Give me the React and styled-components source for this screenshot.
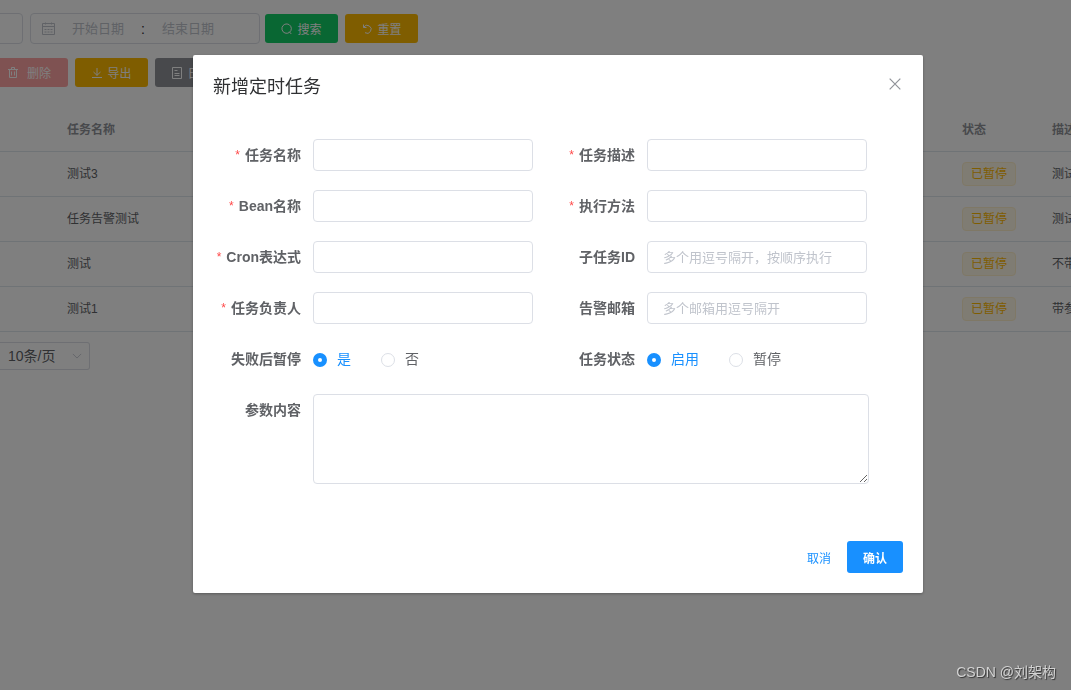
import React, { useId, useState } from "react";
import styled, { createGlobalStyle, css } from "styled-components";

const GlobalStyle = createGlobalStyle`
  * { box-sizing: border-box; }
  body {
    margin: 0;
    background: #fff;
    color: #606266;
    font-family: "Liberation Sans", "Noto Sans CJK SC", sans-serif;
    font-size: 14px;
    overflow: hidden;
  }
  button, input, select, textarea { font-family: inherit; }
`;

const Page = styled.main`
  min-height: 100vh;
  overflow: hidden;
`;

const Toolbar = styled.div`
  display: flex;
  align-items: center;
  gap: 7px;
  padding-top: ${(p) => (p.$top ? 13 : 14)}px;
`;

const SearchInput = styled.input`
  width: 43px;
  height: 31px;
  margin-left: -20px;
  border: 1px solid #dcdfe6;
  border-radius: 4px;
  background: #fff;
`;

const DateRange = styled.div`
  display: flex;
  align-items: center;
  width: 230px;
  height: 31px;
  margin-right: -2px;
  padding: 0 10px;
  border: 1px solid #dcdfe6;
  border-radius: 4px;
  color: #303133;
  svg { color: #c0c4cc; margin: 0 2px 0 1px; }
`;

const RangeSeparator = styled.span`
  width: 10px;
  text-align: center;
`;

const DateInput = styled.input`
  width: 80px;
  padding: 0;
  border: 0;
  outline: 0;
  background: none;
  font-size: 13px;
  text-align: center;
  &::placeholder { color: #c0c4cc; opacity: 1; }
`;

const tones = {
  success: "#13ce66",
  warning: "#ffba00",
  danger: "#ffa4a4",
  info: "#909399",
};

const ToolButton = styled.button`
  display: flex;
  align-items: center;
  justify-content: center;
  gap: 4px;
  flex: none;
  width: 73px;
  height: 29px;
  padding: 0;
  border: 0;
  border-radius: 3px;
  background: ${(p) => tones[p.$tone]};
  color: #fff;
  font-size: 12px;
  white-space: nowrap;
`;

const DeleteButton = styled(ToolButton)`
  gap: 8px;
  width: 78px;
  margin-left: -10px;
`;

const Table = styled.table`
  width: 100%;
  margin-top: 19px;
  border-collapse: collapse;
  table-layout: fixed;
  font-size: 12px;
  white-space: nowrap;
`;

const HeadCell = styled.th`
  height: 45px;
  padding: 4px 0 0;
  border-bottom: 1px solid #dfe6ec;
  color: #909399;
  text-align: left;
  line-height: 22px;
`;

const Cell = styled.td`
  height: 45px;
  padding: 0;
  border-bottom: 1px solid #dfe6ec;
  color: #606266;
  line-height: 22px;
`;

const Col = styled.col`
  width: ${(p) => (p.$w ? p.$w + "px" : "auto")};
`;

const Tag = styled.span`
  display: inline-block;
  height: 24px;
  padding: 0 8px;
  border: 1px solid #fff1cc;
  border-radius: 4px;
  background: #fff8e6;
  color: #ffba00;
  line-height: 22px;
  vertical-align: middle;
`;

const PageSize = styled.div`
  position: relative;
  width: 90px;
  margin-top: 10px;
  svg { position: absolute; right: 8px; top: 9px; color: #c0c4cc; pointer-events: none; }
`;

const PageSelect = styled.select`
  appearance: none;
  width: 100%;
  height: 28px;
  padding: 0 8px;
  border: 1px solid #dcdfe6;
  border-left: 0;
  border-radius: 0 3px 3px 0;
  background: #fff;
  color: #606266;
  font-size: 14px;
`;

const Overlay = styled.div`
  position: fixed;
  inset: 0;
  padding: 55px 0 20px 45px;
  background: rgba(0, 0, 0, 0.5);
`;

const Dialog = styled.section`
  width: 730px;
  max-width: 100%;
  margin: 0 auto;
  border-radius: 2px;
  background: #fff;
  box-shadow: 0 1px 3px rgba(0, 0, 0, 0.3);
`;

const DialogHeader = styled.header`
  display: flex;
  justify-content: space-between;
  align-items: flex-start;
  padding: 20px 20px 10px;
`;

const Title = styled.h2`
  margin: 0;
  color: #303133;
  font-size: 18px;
  font-weight: 400;
  line-height: 24px;
`;

const CloseButton = styled.button`
  display: flex;
  padding: 1px 0;
  border: 0;
  background: none;
  color: #909399;
`;

const Form = styled.form`
  display: grid;
  grid-template-columns: 320px 320px;
  column-gap: 14px;
  row-gap: 19px;
  padding: 30px 20px;
`;

const Field = styled.div`
  display: flex;
  min-width: 0;
  ${(p) =>
    p.$wide &&
    css`
      grid-column: 1 / -1;
      width: 656px;
    `}
`;

const labelStyle = css`
  flex: none;
  width: 100px;
  padding-right: 12px;
  color: #606266;
  font-size: 14px;
  font-weight: 700;
  line-height: 32px;
  text-align: right;
`;

const Label = styled.label`
  ${labelStyle}
  ${(p) =>
    p.$required &&
    css`
      &::before {
        content: "*";
        margin-right: 5px;
        color: #ff4949;
        font-size: 12px;
        font-weight: 400;
        vertical-align: 1px;
        line-height: 1;
      }
    `}
`;

const GroupLabel = styled.span`
  ${labelStyle}
`;

const TextInput = styled.input`
  flex: 1;
  min-width: 0;
  height: 32px;
  padding: 0 15px;
  border: 1px solid #dcdfe6;
  border-radius: 4px;
  background: #fff;
  color: #606266;
  font-size: 13px;
  outline: 0;
  &::placeholder { color: #c0c4cc; opacity: 1; }
`;

const TextArea = styled.textarea`
  flex: 1;
  height: 90px;
  padding: 5px 15px;
  border: 1px solid #dcdfe6;
  border-radius: 4px;
  background: #fff;
  color: #606266;
  font-size: 13px;
  outline: 0;
  resize: vertical;
`;

const RadioGroup = styled.div`
  display: flex;
  align-items: center;
  gap: 30px;
`;

const RadioLabel = styled.label`
  display: flex;
  align-items: center;
  gap: 10px;
  color: ${(p) => (p.$checked ? "#1890ff" : "#606266")};
  font-size: 14px;
  line-height: 32px;
`;

const Radio = styled.input`
  appearance: none;
  width: 14px;
  height: 14px;
  margin: 2px 0 0;
  border: 1px solid #dcdfe6;
  border-radius: 50%;
  background: #fff;
  &:checked {
    border: 5px solid #1890ff;
  }
`;

const DialogFooter = styled.footer`
  display: flex;
  justify-content: flex-end;
  gap: 16px;
  padding: 27px 20px 20px;
`;

const TextButton = styled.button`
  padding: 0;
  border: 0;
  background: none;
  color: #1890ff;
  font-size: 12px;
`;

const PrimaryButton = styled.button`
  width: 56px;
  height: 32px;
  padding: 0;
  border: 0;
  border-radius: 3px;
  background: #1890ff;
  color: #fff;
  font-size: 12px;
  font-weight: 700;
`;

const Watermark = styled.div`
  position: fixed;
  right: 15px;
  bottom: 7px;
  color: #d2d2d2;
  font-size: 14px;
  line-height: 22px;
  text-shadow: 1px 1px 1px rgba(0, 0, 0, 0.6);
`;

function Icon({ size = 12, children }) {
  return (
    <svg width={size} height={size} viewBox="0 0 12 12" fill="none" stroke="currentColor" strokeWidth="1" aria-hidden="true">
      {children}
    </svg>
  );
}

const CalendarIcon = () => (
  <svg width="14" height="14" viewBox="0 0 14 14" fill="none" stroke="currentColor" aria-hidden="true">
    <path d="M.5 1.5h12v11h-12zM.5 4.500h12M3.500 .5v2M9.500 .5v2M2.500 7.500h2M5.500 7.500h2M8.500 7.500h2M2.500 10h2M5.500 10h2M8.500 10h2" />
  </svg>
);
const SearchIcon = () => (
  <Icon><path d="M8.300 9.500A4.700 4.700 0 1 1 9.900 7.600M8.300 8.800l2 2.200" /><path d="M9.900 7.600l-1.600 1.900" /></Icon>
);
const RefreshIcon = () => (
  <Icon><path d="M2.500 1.500v3h3M2.700 4.200A4 4 0 1 1 4 9.700" /></Icon>
);
const TrashIcon = () => (
  <Icon><path d="M1 2.500h10M4.500 2.500v-2h3v2M2.500 2.500v8h7v-8M4.500 4.500v4M7.500 4.500v4" /></Icon>
);
const DownloadIcon = () => (
  <Icon><path d="M6 1v7.500M2.500 5L6 8.300 9.500 5M1 10.500h10" /></Icon>
);
const DocumentIcon = () => (
  <Icon><path d="M1.500 .5h9v11h-9zM3.500 3.500h3M3.500 6.500h5M3.500 8.500h5" /></Icon>
);
const ChevronIcon = () => (
  <Icon size={10}><path d="M1 3.500l5 5 5-5" /></Icon>
);
const CloseIcon = () => (
  <Icon size={16}><path d="M2 2l8 8M10 2l-8 8" strokeWidth=".9" /></Icon>
);

function InputField({ label, required, placeholder }) {
  const id = useId();
  return (
    <Field>
      <Label htmlFor={id} $required={required}>{label}</Label>
      <TextInput id={id} type="text" placeholder={placeholder} />
    </Field>
  );
}

function RadioField({ label, options }) {
  const id = useId();
  const [value, setValue] = useState(options[0]);
  return (
    <Field role="radiogroup" aria-labelledby={id}>
      <GroupLabel id={id}>{label}</GroupLabel>
      <RadioGroup>
        {options.map((option) => (
          <RadioLabel key={option} $checked={value === option}>
            <Radio type="radio" name={id} checked={value === option} onChange={() => setValue(option)} />
            {option}
          </RadioLabel>
        ))}
      </RadioGroup>
    </Field>
  );
}

const rows = [
  ["测试3", "测试任务"],
  ["任务告警测试", "测试告警"],
  ["测试", "不带参数"],
  ["测试1", "带参数"],
];

export default function App() {
  return (
    <>
      <GlobalStyle />
      <Page>
        <Toolbar $top>
          <SearchInput type="text" aria-label="任务名称" />
          <DateRange>
            <CalendarIcon />
            <DateInput placeholder="开始日期" aria-label="开始日期" />
            <RangeSeparator>:</RangeSeparator>
            <DateInput placeholder="结束日期" aria-label="结束日期" />
          </DateRange>
          <ToolButton type="button" $tone="success"><SearchIcon />搜索</ToolButton>
          <ToolButton type="button" $tone="warning"><RefreshIcon />重置</ToolButton>
        </Toolbar>
        <Toolbar>
          <DeleteButton type="button" $tone="danger" disabled><TrashIcon />删除</DeleteButton>
          <ToolButton type="button" $tone="warning"><DownloadIcon />导出</ToolButton>
          <ToolButton type="button" $tone="info"><DocumentIcon />日志</ToolButton>
        </Toolbar>
        <Table>
          <colgroup>
            <Col $w={67} />
            <Col />
            <Col $w={90} />
            <Col $w={19} />
          </colgroup>
          <thead>
            <tr>
              <HeadCell />
              <HeadCell>任务名称</HeadCell>
              <HeadCell>状态</HeadCell>
              <HeadCell>描述</HeadCell>
            </tr>
          </thead>
          <tbody>
            {rows.map(([name, description]) => (
              <tr key={name}>
                <Cell />
                <Cell>{name}</Cell>
                <Cell><Tag>已暂停</Tag></Cell>
                <Cell>{description}</Cell>
              </tr>
            ))}
          </tbody>
        </Table>
        <PageSize>
          <PageSelect aria-label="每页条数"><option>10条/页</option></PageSelect>
          <ChevronIcon />
        </PageSize>
      </Page>
      <Overlay>
        <Dialog role="dialog" aria-modal="true" aria-labelledby="dialog-title">
          <DialogHeader>
            <Title id="dialog-title">新增定时任务</Title>
            <CloseButton type="button" aria-label="关闭"><CloseIcon /></CloseButton>
          </DialogHeader>
          <Form>
            <InputField label="任务名称" required />
            <InputField label="任务描述" required />
            <InputField label="Bean名称" required />
            <InputField label="执行方法" required />
            <InputField label="Cron表达式" required />
            <InputField label="子任务ID" placeholder="多个用逗号隔开，按顺序执行" />
            <InputField label="任务负责人" required />
            <InputField label="告警邮箱" placeholder="多个邮箱用逗号隔开" />
            <RadioField label="失败后暂停" options={["是", "否"]} />
            <RadioField label="任务状态" options={["启用", "暂停"]} />
            <Field $wide>
              <Label htmlFor="params">参数内容</Label>
              <TextArea id="params" />
            </Field>
          </Form>
          <DialogFooter>
            <TextButton type="button">取消</TextButton>
            <PrimaryButton type="button">确认</PrimaryButton>
          </DialogFooter>
        </Dialog>
      </Overlay>
      <Watermark>CSDN @刘架构</Watermark>
    </>
  );
}
